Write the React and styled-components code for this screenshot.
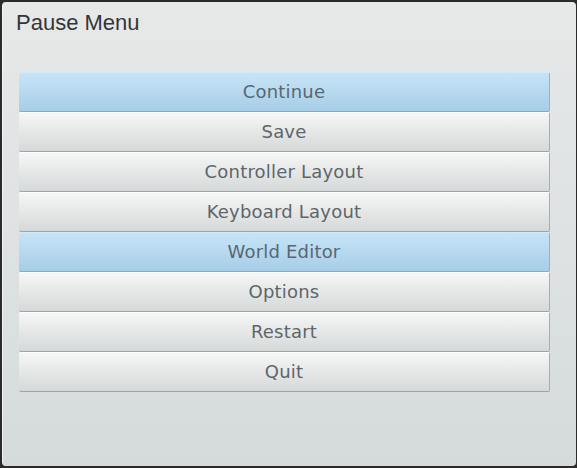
import styled, { createGlobalStyle } from "styled-components";

const Global = createGlobalStyle`
  html, body {
    margin: 0;
    padding: 0;
    background: #2b2b2b;
  }
`;

const Window = styled.div`
  box-sizing: border-box;
  width: 574px;
  height: 464px;
  margin: 2px 1px 0 2px;
  padding: 9px 26px 0 16px;
  border-radius: 4px;
  background: linear-gradient(#e7e9e9, #d5dbdb);
  border-left: 1px solid #f2f3f3;
`;

const Title = styled.h1`
  margin: 0 0 0 -3px;
  font-family: "Liberation Sans", Arial, sans-serif;
  font-weight: normal;
  font-size: 22px;
  line-height: 24px;
  color: #333637;
`;

const Menu = styled.div`
  display: flex;
  flex-direction: column;
  margin-top: 37px;
`;

const Item = styled.button`
  display: block;
  box-sizing: border-box;
  height: 40px;
  width: 100%;
  padding: 0 0 1px;
  border: none;
  border-radius: 2px;
  border-right: 1px solid #a8aeb0;
  border-bottom: 1px solid #9ea4a6;
  border-top: 1px solid ${({ $active }) => ($active ? "#d2eaf8" : "#ffffff")};
  background: ${({ $active }) =>
    $active
      ? "linear-gradient(#c6e4f7, #a7cde7)"
      : "linear-gradient(#f5f6f6, #d6d9d9)"};
  font-family: "DejaVu Sans", sans-serif;
  font-size: 18px;
  letter-spacing: 0.2px;
  color: ${({ $active }) => ($active ? "#596772" : "#5d666b")};
  cursor: pointer;
`;

const items = [
  { label: "Continue", active: true },
  { label: "Save" },
  { label: "Controller Layout" },
  { label: "Keyboard Layout" },
  { label: "World Editor", active: true },
  { label: "Options" },
  { label: "Restart" },
  { label: "Quit" },
];

const App = () => {
  return (
    <>
      <Global />
      <Window>
        <Title>Pause Menu</Title>
        <Menu>
          {items.map((it) => (
            <Item key={it.label} $active={it.active}>
              {it.label}
            </Item>
          ))}
        </Menu>
      </Window>
    </>
  );
};

export default App;
